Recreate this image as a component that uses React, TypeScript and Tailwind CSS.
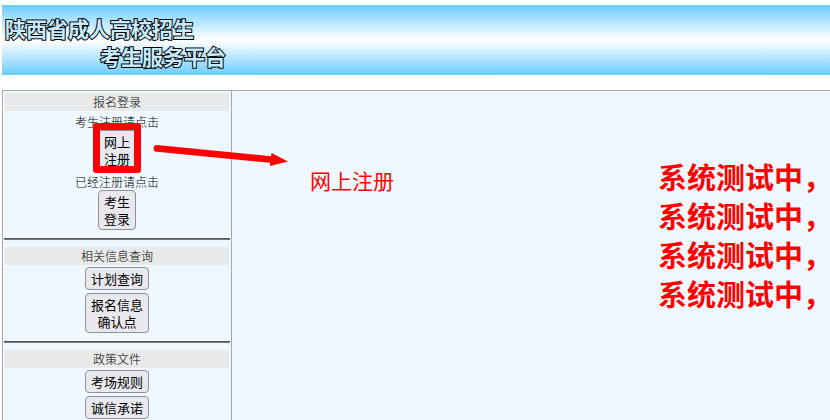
import type { ReactNode } from "react";

type SectionProps = {
  title: string;
  children: ReactNode;
};

const notices = ["系统测试中，", "系统测试中，", "系统测试中，", "系统测试中，"];

const Section = ({ title, children }: SectionProps) => (
  <section className="flex flex-col items-center">
    <h2 className="mb-[2px] w-full px-[2px] text-center text-xs leading-[18px] font-light text-black">
      <span className="block bg-[#e9e9e9]">{title}</span>
    </h2>
    {children}
  </section>
);

const Hint = ({ children }: { children: ReactNode }) => (
  <p className="text-xs leading-[17px] font-light text-black">{children}</p>
);

const Divider = () => (
  <hr className="mx-px mt-[5px] mb-[7px] h-[2px] border-0 border-t border-b border-t-[#555] border-b-[#777]" />
);

const MenuButton = ({ lines, marked }: { lines: string[]; marked?: boolean }) => (
  <div className="relative mb-[3px] flex">
    <button
      type="button"
      className="rounded border border-[#8f8f9d] bg-[#e9e9ed] px-[5px] py-[2px] text-[13px] leading-[17px] text-black"
    >
      {lines.map((line) => (
        <span key={line} className="block">
          {line}
        </span>
      ))}
    </button>
    {/* Highlight frame */}
    {marked && (
      <div className="pointer-events-none absolute -inset-x-[5px] -top-[7px] -bottom-[3px] rounded-[3px] border-7 border-[#f00]" />
    )}
  </div>
);

export default function App() {
  return (
    <div className="flex min-h-screen flex-col bg-white pt-[5px] pl-[2px] font-['Noto_Sans_CJK_SC',sans-serif]">
      {/* Banner */}
      <header className="bg-linear-to-b from-[#66ccff] via-white to-[#66ccff] pt-[9px] pb-[5px] pl-[3px]">
        <h1 className="text-[21px] leading-[28px] font-bold text-[#c6ebfd] [-webkit-text-stroke:2px_black] [paint-order:stroke_fill]">
          <span className="block">陕西省成人高校招生</span>
          <span className="block pl-[95px]">考生服务平台</span>
        </h1>
      </header>

      <div className="relative mt-[15px] flex grow border-t border-l border-[#a9a9a9] bg-[#f0f8ff]">
        {/* Menu */}
        <nav className="w-[229px] shrink-0 border-r border-[#a9a9a9] pt-[2px]">
          <Section title="报名登录">
            <Hint>考生注册请点击</Hint>
            <MenuButton lines={["网上", "注册"]} marked />
            <Hint>已经注册请点击</Hint>
            <MenuButton lines={["考生", "登录"]} />
          </Section>
          <Divider />
          <Section title="相关信息查询">
            <MenuButton lines={["计划查询"]} />
            <MenuButton lines={["报名信息", "确认点"]} />
          </Section>
          <Divider />
          <Section title="政策文件">
            <MenuButton lines={["考场规则"]} />
            <MenuButton lines={["诚信承诺"]} />
          </Section>
        </nav>

        {/* Content */}
        <main className="flex grow items-start justify-between pt-[66px] pl-[78px] text-[#f00]">
          <p className="pt-[7px] text-[21px] leading-8">网上注册</p>
          <div className="w-[172px] overflow-hidden text-[29px] leading-[39px] font-bold whitespace-nowrap">
            {notices.map((notice, i) => (
              <p key={i}>{notice}</p>
            ))}
          </div>
        </main>

        {/* Arrow from the register button to its label */}
        <svg
          className="pointer-events-none absolute top-[51px] left-[147px]"
          width="144"
          height="30"
          viewBox="150 142 144 30"
          aria-hidden="true"
        >
          <path
            d="M157 145 L271 156.300 L271.500 153 L288 161.500 L270 166 L270 162.800 L157 151.800 A3.400 3.400 0 0 1 157 145 Z"
            fill="#f00"
          />
        </svg>
      </div>
    </div>
  );
}
